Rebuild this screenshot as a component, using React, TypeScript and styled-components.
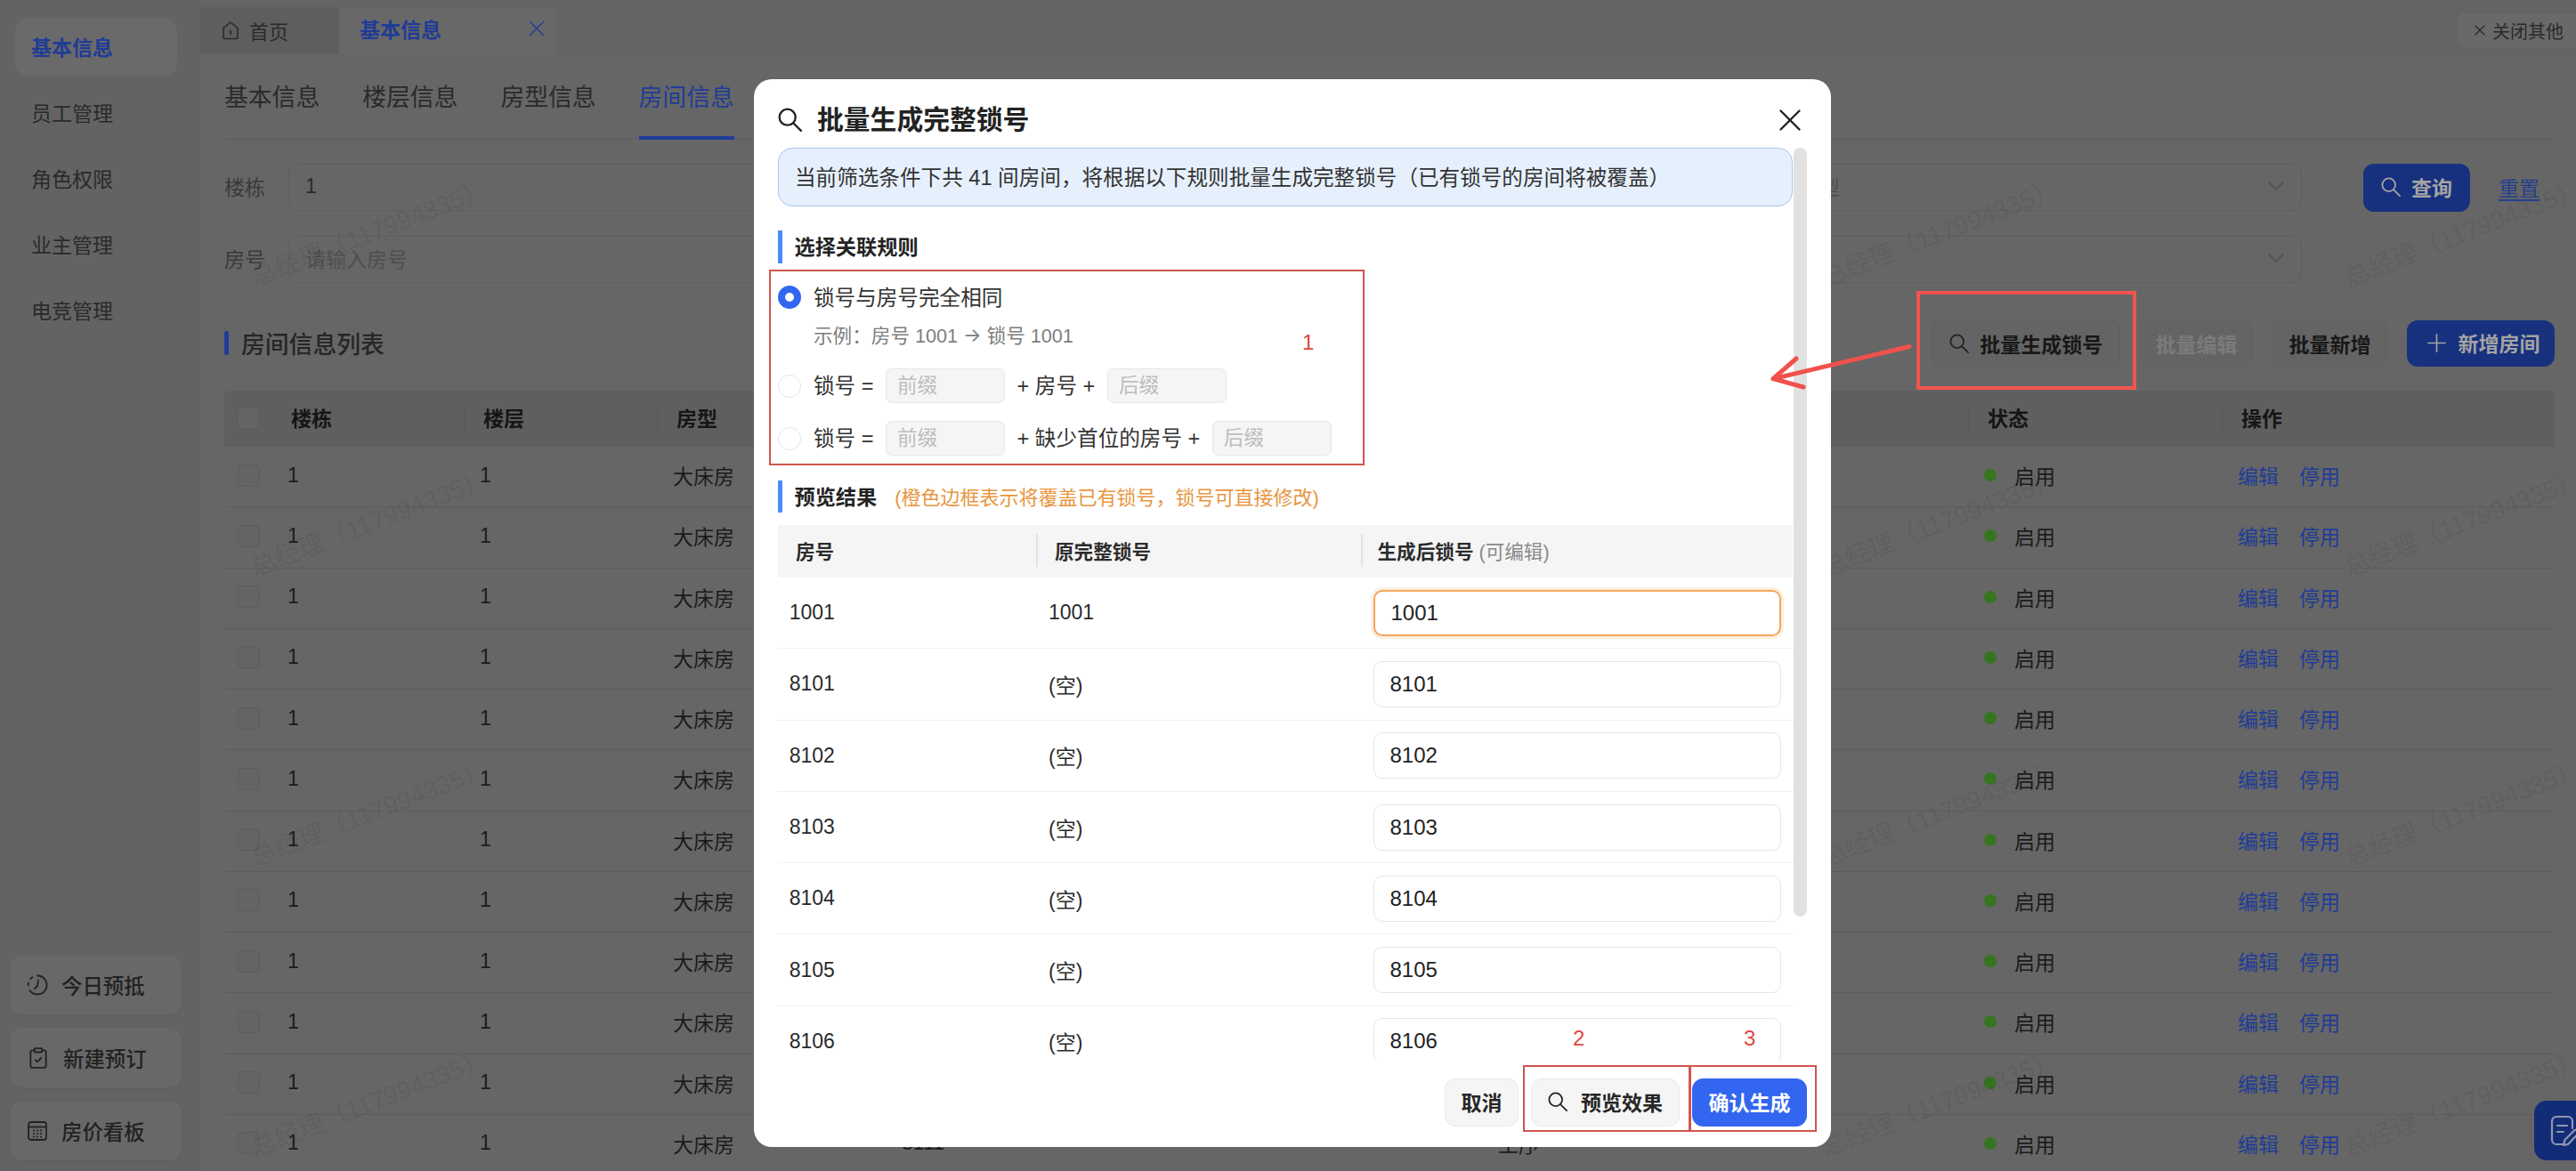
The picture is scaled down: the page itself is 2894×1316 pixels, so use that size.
import styled, { createGlobalStyle } from "styled-components";
import { ChevronDown, ClipboardCheck, Plus, X } from "lucide-react";

const FONT = `"Liberation Sans", "Noto Sans CJK SC", sans-serif`;

const GlobalStyle = createGlobalStyle`
  * {
    box-sizing: border-box;
  }
  html,
  body {
    margin: 0;
    padding: 0;
    background: #666;
    font-family: ${FONT};
  }
  input {
    font-family: ${FONT};
    outline: none;
  }
`;

const Page = styled.div`
  position: relative;
  width: 2894px;
  height: 1316px;
  display: flex;
  overflow: hidden;
  background: #666;
  color: #1c1c1c;
`;

const Sidebar = styled.aside`
  width: 225px;
  flex: none;
  display: flex;
  flex-direction: column;
  justify-content: space-between;
  background: #636363;
  padding: 20px 0 12px;
`;

const NavList = styled.nav`
  display: flex;
  flex-direction: column;
  gap: 8px;
  padding: 0 26px 0 17px;
`;

const NavItem = styled.div<{ $active?: boolean }>`
  height: 66px;
  display: flex;
  align-items: center;
  padding: 0 0 2px 18px;
  border-radius: 15px;
  font-size: 23px;
  font-weight: ${(p) => (p.$active ? 700 : 400)};
  color: ${(p) => (p.$active ? "#1f3c96" : "#2a2a2a")};
  background: ${(p) => (p.$active ? "#6a6a6a" : "transparent")};
`;

const QuickList = styled.div`
  display: flex;
  flex-direction: column;
  gap: 15px;
  padding: 0 21px 0 11px;
`;

const QuickItem = styled.div`
  height: 67px;
  display: flex;
  align-items: center;
  gap: 15px;
  padding-left: 19px;
  border-radius: 14px;
  background: #686868;
  box-shadow: 0 1px 4px rgba(0, 0, 0, 0.05);
  font-size: 23.4px;
  font-weight: 500;
  color: #222;
`;

const Main = styled.main`
  flex: 1;
  min-width: 0;
  display: flex;
  flex-direction: column;
`;

const TabBar = styled.div`
  height: 60px;
  flex: none;
  display: flex;
  align-items: flex-end;
  background: #646464;
`;

const HomeTab = styled.div`
  width: 156px;
  height: 52px;
  display: flex;
  align-items: center;
  gap: 11px;
  padding-left: 24px;
  background: #5e5e5e;
  font-size: 22px;
  color: #2a2a2a;
`;

const ActiveTab = styled.div`
  width: 244px;
  height: 52px;
  display: flex;
  align-items: center;
  justify-content: space-between;
  padding: 0 7px 4px 23px;
  background: #686868;
  font-size: 23px;
  font-weight: 700;
  color: #1f3c96;
`;

const CloseOthers = styled.div`
  width: 132px;
  height: 38px;
  margin: 0 0 7px auto;
  display: flex;
  align-items: center;
  gap: 4px;
  padding-left: 14px;
  border-radius: 5px 0 0 5px;
  background: #696969;
  font-size: 20px;
  color: #2a2a2a;
`;

const Content = styled.div`
  padding: 0 24px 0 27px;
`;

const SubTabs = styled.div`
  height: 97px;
  display: flex;
  gap: 48px;
  border-bottom: 1px solid #5e5e5e;
`;

const SubTab = styled.div<{ $active?: boolean }>`
  height: 97px;
  padding-top: 30px;
  line-height: 40px;
  font-size: 26.8px;
  color: ${(p) => (p.$active ? "#1f3c96" : "#2a2a2a")};
  border-bottom: 4px solid ${(p) => (p.$active ? "#1f3c96" : "transparent")};
`;

const FilterArea = styled.div`
  display: flex;
  margin-top: 27px;
`;

const FilterGrid = styled.div`
  width: 2334px;
  display: grid;
  grid-template-columns: repeat(3, 1fr);
  gap: 28px 30px;
`;

const Field = styled.div`
  display: flex;
  align-items: center;
`;

const FieldLabel = styled.div`
  width: 72px;
  flex: none;
  padding-bottom: 3px;
  font-size: 23px;
  color: #3a3a3a;
`;

const FieldBox = styled.div<{ $muted?: boolean }>`
  flex: 1;
  height: 53px;
  display: flex;
  align-items: center;
  justify-content: space-between;
  padding: 0 12px 3px 18px;
  border: 1px solid #5e5e5e;
  border-radius: 10px;
  white-space: nowrap;
  font-size: 23px;
  color: ${(p) => (p.$muted ? "#4e4e4e" : "#2a2a2a")};
`;

const WideValue = styled.span`
  letter-spacing: 2px;
`;

const FilterActions = styled.div`
  display: flex;
  align-items: center;
  align-self: flex-start;
  height: 54px;
  gap: 32px;
  margin-left: 69px;
`;

const PrimaryButton = styled.div<{ $width: number; $gap: number }>`
  width: ${(p) => p.$width}px;
  height: 100%;
  display: flex;
  align-items: center;
  justify-content: center;
  gap: ${(p) => p.$gap}px;
  padding-bottom: 2px;
  border-radius: 12px;
  background: #17317f;
  font-size: 23px;
  font-weight: 700;
  color: #a4a4a4;
`;

const ResetLink = styled.div`
  padding-bottom: 3px;
  font-size: 23px;
  color: #23408f;
  text-decoration: underline;
  text-underline-offset: 4px;
`;

const ListHead = styled.div`
  display: flex;
  align-items: center;
  justify-content: space-between;
  height: 52px;
  margin-top: 42px;
`;

const ListTitle = styled.h2`
  margin: 0;
  display: flex;
  align-items: center;
  gap: 14px;
  padding-bottom: 2px;
  font-size: 26.8px;
  font-weight: 500;
  color: #262626;
  &::before {
    content: "";
    width: 5px;
    height: 27px;
    border-radius: 2px;
    background: #1f3c96;
  }
`;

const Toolbar = styled.div`
  display: flex;
  height: 100%;
  gap: 22px;
`;

const ToolButton = styled.div<{ $width: number; $disabled?: boolean }>`
  width: ${(p) => p.$width}px;
  display: flex;
  align-items: center;
  justify-content: center;
  gap: 12.5px;
  padding-bottom: 1px;
  border: 1px solid ${(p) => (p.$disabled ? "#626262" : "#5f5f5f")};
  border-radius: 11px;
  background: #646464;
  font-size: 23px;
  font-weight: 700;
  color: ${(p) => (p.$disabled ? "#7b7b7b" : "#181818")};
`;

const GRID = "71px 216px 217px 257px 670px 546px 285px 356px";

const ListHeader = styled.div`
  display: grid;
  grid-template-columns: ${GRID};
  align-items: center;
  height: 63px;
  margin-top: 27px;
  padding-bottom: 3px;
  background: #5f5f5f;
  border-radius: 6px 6px 0 0;
  font-size: 23px;
  font-weight: 700;
  color: #151515;
`;

const HeadCell = styled.div<{ $sep?: boolean }>`
  position: relative;
  padding-left: 4px;
  &::before {
    content: ${(p) => (p.$sep ? '""' : "none")};
    position: absolute;
    left: -18px;
    top: 0;
    bottom: 0;
    width: 1px;
    background: #5a5a5a;
  }
`;

const ListRow = styled.div`
  display: grid;
  grid-template-columns: ${GRID};
  align-items: center;
  height: 68.25px;
  padding-bottom: 3px;
  border-bottom: 1px solid #5d5d5d;
  font-size: 23px;
  color: #1b1b1b;
`;

const CheckBox = styled.div`
  width: 25px;
  height: 25px;
  margin-left: 15px;
  border: 1px solid #5c5c5c;
  border-radius: 5px;
  background: #646464;
`;

const StatusCell = styled.div`
  display: flex;
  align-items: center;
  gap: 20px;
`;

const StatusDot = styled.span`
  width: 14px;
  height: 14px;
  border-radius: 50%;
  background: #36751f;
`;

const Links = styled.div`
  display: flex;
  gap: 23px;
  color: #1f3c96;
`;

const WatermarkGrid = styled.div`
  position: absolute;
  left: 120px;
  top: 96px;
  display: grid;
  grid-template-columns: repeat(5, 588px);
  grid-auto-rows: 326px;
  pointer-events: none;
`;

const Watermark = styled.div`
  display: flex;
  align-items: center;
  justify-content: center;
  transform: rotate(-21deg);
  white-space: nowrap;
  font-size: 28.5px;
  color: rgba(0, 0, 0, 0.065);
`;

const FloatButton = styled.div`
  position: absolute;
  left: 2847px;
  top: 1237px;
  width: 70px;
  height: 67px;
  padding: 16px 0 0 18px;
  border-radius: 14px;
  background: #132c78;
`;

const Modal = styled.section`
  position: absolute;
  left: 847px;
  top: 89px;
  width: 1210px;
  height: 1200px;
  display: flex;
  flex-direction: column;
  border-radius: 20px;
  background: #fff;
  color: #252525;
  overflow: hidden;
`;

const ModalHead = styled.header`
  height: 77px;
  flex: none;
  display: flex;
  align-items: center;
  padding: 14px 25px 0 27px;
`;

const ModalTitle = styled.h1`
  margin: 0;
  display: flex;
  align-items: center;
  gap: 17px;
  flex: 1;
  font-size: 29.8px;
  font-weight: 700;
  color: #222;
`;

const TitleText = styled.span`
  padding-bottom: 5px;
`;

const ModalBody = styled.div`
  position: relative;
  flex: 1;
  min-height: 0;
  overflow: hidden;
  padding-left: 27px;
`;

const Scroller = styled.div`
  position: absolute;
  top: 0;
  right: 27px;
  width: 15.5px;
  height: 864px;
  border-radius: 8px;
  background: #e1e1e1;
`;

const BodyInner = styled.div`
  width: 1139.5px;
`;

const Notice = styled.div`
  height: 66px;
  display: flex;
  align-items: center;
  padding: 0 0 2px 18px;
  border: 1px solid #a9c6ee;
  border-radius: 16px;
  background: #e6f0fd;
  font-size: 23.6px;
  color: #333;
`;

const SectionHead = styled.div<{ $top: number; $height: number }>`
  margin-top: ${(p) => p.$top}px;
  height: ${(p) => p.$height}px;
  display: flex;
  align-items: center;
  gap: 20px;
  padding: 0 0 3px 13.5px;
  border-left: 5px solid #4a8cf7;
  font-size: 23.2px;
  font-weight: 700;
  color: #242424;
`;

const SectionHint = styled.span`
  font-size: 22px;
  font-weight: 400;
  color: #e8963f;
`;

const RuleRow = styled.div<{ $top: number; $height: number }>`
  margin-top: ${(p) => p.$top}px;
  height: ${(p) => p.$height}px;
  display: flex;
  align-items: center;
  gap: 13.5px;
  font-size: 23.6px;
  color: #333;
`;

const RuleText = styled.span`
  padding-bottom: 3px;
`;

const Radio = styled.span<{ $checked?: boolean }>`
  width: 26px;
  height: 26px;
  flex: none;
  margin-right: 0.5px;
  border-radius: 50%;
  border: ${(p) => (p.$checked ? "8px solid #3366f0" : "1px solid #e4e4e4")};
  background: #fff;
`;

const RuleExample = styled.div`
  margin: 11px 0 0 40px;
  height: 32px;
  display: flex;
  align-items: center;
  gap: 6px;
  padding-bottom: 3px;
  font-size: 21.6px;
  color: #7d7d7d;
`;

const ExampleArrow = styled.span`
  font-family: Inter, sans-serif;
`;

const AffixInput = styled.input`
  width: 134px;
  height: 39px;
  padding: 0 12px;
  border: 1px solid #e6e6e6;
  border-radius: 7px;
  background: #f5f5f5;
  font-size: 22.5px;
  &::placeholder {
    color: #bdbdbd;
  }
`;

const PREVIEW_GRID = "304px 364.5px 1fr";

const PreviewHeader = styled.div`
  display: grid;
  grid-template-columns: ${PREVIEW_GRID};
  align-items: center;
  height: 59px;
  margin-top: 14px;
  padding-bottom: 3px;
  background: #f5f5f5;
  font-size: 21.6px;
  font-weight: 600;
  color: #2c2c2c;
`;

const PreviewHeadCell = styled.div<{ $indent: number; $sep?: boolean }>`
  position: relative;
  padding-left: ${(p) => p.$indent}px;
  &::before {
    content: ${(p) => (p.$sep ? '""' : "none")};
    position: absolute;
    left: -14px;
    top: -3px;
    bottom: -3px;
    width: 2px;
    background: #e2e2e2;
  }
`;

const MutedNote = styled.span`
  font-weight: 400;
  color: #8a8a8a;
`;

const PreviewRow = styled.div`
  display: grid;
  grid-template-columns: ${PREVIEW_GRID};
  align-items: center;
  height: 80.3px;
  border-bottom: 1px solid #f0f0f0;
  font-size: 23px;
  color: #2a2a2a;
`;

const FirstCell = styled.div`
  padding-left: 12.7px;
`;

const LockInput = styled.input<{ $warn?: boolean }>`
  width: 458px;
  height: 52px;
  padding: 0 18px;
  border: ${(p) => (p.$warn ? "2px solid #f1a65c" : "1px solid #e6e6e6")};
  border-radius: 10px;
  box-shadow: ${(p) => (p.$warn ? "0 0 0 3px rgba(241, 166, 92, 0.18)" : "none")};
  background: #fff;
  font-size: 24px;
  color: #222;
`;

const ModalFoot = styled.footer`
  height: 96px;
  flex: none;
  display: flex;
  justify-content: flex-end;
  gap: 14px;
  padding: 19px 27px 0 0;
`;

const FootButton = styled.div<{ $primary?: boolean; $width: number }>`
  width: ${(p) => p.$width}px;
  height: 54px;
  display: flex;
  align-items: center;
  justify-content: center;
  gap: 15px;
  padding-bottom: 2px;
  border: 1px solid ${(p) => (p.$primary ? "#3366f0" : "#e8e8e8")};
  border-radius: 12px;
  background: ${(p) => (p.$primary ? "#3366f0" : "#f5f5f5")};
  font-size: 23px;
  font-weight: 700;
  color: ${(p) => (p.$primary ? "#fff" : "#262626")};
`;

const MarkBox = styled.div<{ $x: number; $y: number; $w: number; $h: number; $thick?: boolean }>`
  position: absolute;
  left: ${(p) => p.$x}px;
  top: ${(p) => p.$y}px;
  width: ${(p) => p.$w}px;
  height: ${(p) => p.$h}px;
  border: ${(p) => (p.$thick ? "4px solid #f4544e" : "2px solid #d0554f")};
  pointer-events: none;
`;

const MarkNumber = styled.div<{ $x: number; $y: number }>`
  position: absolute;
  left: ${(p) => p.$x}px;
  top: ${(p) => p.$y}px;
  font-size: 24px;
  line-height: 28px;
  color: #e2453f;
`;

const MarkArrow = styled.svg`
  position: absolute;
  left: 0;
  top: 0;
  pointer-events: none;
`;

// handle is longer than lucide's search, the circle sits further up-left
const SearchIcon = ({ size, color = "currentColor", width = 2 }: { size: number; color?: string; width?: number }) => (
  <svg width={size} height={size} viewBox="0 0 24 24" fill="none" stroke={color} strokeWidth={width} strokeLinecap="round">
    <circle cx="9.5" cy="9.5" r="8" />
    <path d="M15.3 15.3 23 23" />
  </svg>
);

const HomeIcon = () => (
  <svg width="20" height="22" viewBox="0 0 20 22" fill="none" stroke="#2a2a2a" strokeWidth="1.6" strokeLinejoin="round" strokeLinecap="round">
    <path d="M2 8.5 10 2l8 6.5V19a1.5 1.5 0 0 1-1.5 1.5h-13A1.5 1.5 0 0 1 2 19Z" />
    <path d="M10 11v4.5" />
  </svg>
);

const ClockIcon = () => (
  <svg width="24" height="24" viewBox="0 0 24 24" fill="none" stroke="#222" strokeWidth="1.8" strokeLinecap="round">
    <path d="M12 1.5a10.5 10.5 0 1 1-8.6 16.5" />
    <path d="M1.6 12.6a10.5 10.5 0 0 1 .9-4.2M4.2 5.3a10.5 10.5 0 0 1 3.2-2.7" strokeDasharray="3 2.4" />
    <path d="M13 6.5 12 13l-3 3" />
  </svg>
);

const CalendarIcon = () => (
  <svg width="24" height="24" viewBox="0 0 24 24" fill="none" stroke="#222" strokeWidth="1.8">
    <rect x="2" y="2" width="20" height="20" rx="3" />
    <path d="M2 7.5h20" />
    <g fill="#222" stroke="none">
      <circle cx="8" cy="11.5" r="1.1" />
      <circle cx="12" cy="11.5" r="1.1" />
      <circle cx="16" cy="11.5" r="1.1" />
      <circle cx="8" cy="15" r="1.1" />
      <circle cx="12" cy="15" r="1.1" />
      <circle cx="16" cy="15" r="1.1" />
      <circle cx="8" cy="18.5" r="1.1" />
      <circle cx="12" cy="18.5" r="1.1" />
      <circle cx="16" cy="18.5" r="1.1" />
    </g>
  </svg>
);

const NoteIcon = () => (
  <svg width="42" height="36" viewBox="0 0 42 36" fill="none" stroke="#8f97ad" strokeWidth="2.2" strokeLinecap="round" strokeLinejoin="round">
    <path d="M15 33H7a5 5 0 0 1-5-5V7a5 5 0 0 1 5-5h13a5 5 0 0 1 5 5v8" />
    <path d="M8 12h11M8 19h7" />
    <path d="M15 34l1.5-6 11-11a3 3 0 0 1 4 4L20 33Z" />
  </svg>
);

const navItems = ["基本信息", "员工管理", "角色权限", "业主管理", "电竞管理"];
const subTabs = ["基本信息", "楼层信息", "房型信息", "房间信息"];
const roomRows = Array.from({ length: 12 }, (_, i) => i);
const previewRows = [
  { room: "1001", old: "1001", next: "1001", warn: true },
  { room: "8101", old: "(空)", next: "8101" },
  { room: "8102", old: "(空)", next: "8102" },
  { room: "8103", old: "(空)", next: "8103" },
  { room: "8104", old: "(空)", next: "8104" },
  { room: "8105", old: "(空)", next: "8105" },
  { room: "8106", old: "(空)", next: "8106" },
];

export default function App() {
  return (
    <Page>
      <GlobalStyle />
      <Sidebar>
        <NavList>
          {navItems.map((name, i) => (
            <NavItem key={name} $active={i === 0}>
              {name}
            </NavItem>
          ))}
        </NavList>
        <QuickList>
          <QuickItem>
            <ClockIcon />
            今日预抵
          </QuickItem>
          <QuickItem>
            <ClipboardCheck size={26} color="#222" strokeWidth={1.7} />
            新建预订
          </QuickItem>
          <QuickItem>
            <CalendarIcon />
            房价看板
          </QuickItem>
        </QuickList>
      </Sidebar>

      <Main>
        <TabBar>
          <HomeTab>
            <HomeIcon />
            首页
          </HomeTab>
          <ActiveTab>
            基本信息
            <X size={30} color="#1f3c96" strokeWidth={1.1} />
          </ActiveTab>
          <CloseOthers>
            <X size={20} color="#2a2a2a" strokeWidth={1.5} />
            关闭其他
          </CloseOthers>
        </TabBar>

        <Content>
          <SubTabs>
            {subTabs.map((name, i) => (
              <SubTab key={name} $active={i === 3}>
                {name}
              </SubTab>
            ))}
          </SubTabs>

          <FilterArea>
            <FilterGrid>
              <Field>
                <FieldLabel>楼栋</FieldLabel>
                <FieldBox>1</FieldBox>
              </Field>
              <Field>
                <FieldLabel>楼层</FieldLabel>
                <FieldBox $muted>请选择楼层</FieldBox>
              </Field>
              <Field>
                <FieldLabel>房型</FieldLabel>
                <FieldBox $muted>
                  <WideValue>请选择的房型</WideValue>
                  <ChevronDown size={32} color="#4e4e4e" strokeWidth={1.1} />
                </FieldBox>
              </Field>
              <Field>
                <FieldLabel>房号</FieldLabel>
                <FieldBox $muted>请输入房号</FieldBox>
              </Field>
              <Field>
                <FieldLabel>锁号</FieldLabel>
                <FieldBox $muted>请输入锁号</FieldBox>
              </Field>
              <Field>
                <FieldLabel>状态</FieldLabel>
                <FieldBox $muted>
                  <span />
                  <ChevronDown size={32} color="#4e4e4e" strokeWidth={1.1} />
                </FieldBox>
              </Field>
            </FilterGrid>
            <FilterActions>
              <PrimaryButton $width={120} $gap={12}>
                <SearchIcon size={22} width={1.9} />
                查询
              </PrimaryButton>
              <ResetLink>重置</ResetLink>
            </FilterActions>
          </FilterArea>

          <ListHead>
            <ListTitle>房间信息列表</ListTitle>
            <Toolbar>
              <ToolButton $width={212}>
                <SearchIcon size={22} color="#222" width={1.9} />
                批量生成锁号
              </ToolButton>
              <ToolButton $width={127} $disabled>
                批量编辑
              </ToolButton>
              <ToolButton $width={129}>批量新增</ToolButton>
              <PrimaryButton $width={166} $gap={8}>
                <Plus size={33} strokeWidth={1.2} />
                新增房间
              </PrimaryButton>
            </Toolbar>
          </ListHead>

          <ListHeader>
            <CheckBox />
            <HeadCell>楼栋</HeadCell>
            <HeadCell $sep>楼层</HeadCell>
            <HeadCell $sep>房型</HeadCell>
            <HeadCell />
            <HeadCell />
            <HeadCell $sep>状态</HeadCell>
            <HeadCell $sep>操作</HeadCell>
          </ListHeader>
          {roomRows.map((i) => (
            <ListRow key={i}>
              <CheckBox />
              <div>1</div>
              <div>1</div>
              <div>大床房</div>
              <div>8111</div>
              <div>工序</div>
              <StatusCell>
                <StatusDot />
                启用
              </StatusCell>
              <Links>
                <span>编辑</span>
                <span>停用</span>
              </Links>
            </ListRow>
          ))}
        </Content>
      </Main>

      <WatermarkGrid>
        {Array.from({ length: 20 }, (_, i) => (
          // the two middle columns sit wholly behind the dialog
          <Watermark key={i}>{i % 5 === 1 || i % 5 === 2 ? null : "总经理（117994335）"}</Watermark>
        ))}
      </WatermarkGrid>

      <FloatButton>
        <NoteIcon />
      </FloatButton>

      <Modal>
        <ModalHead>
          <ModalTitle>
            <SearchIcon size={27} color="#222" width={2.1} />
            <TitleText>批量生成完整锁号</TitleText>
          </ModalTitle>
          <X size={42} color="#222" strokeWidth={1.4} />
        </ModalHead>
        <ModalBody>
          <Scroller />
          <BodyInner>
            <Notice>当前筛选条件下共 41 间房间，将根据以下规则批量生成完整锁号（已有锁号的房间将被覆盖）</Notice>

            <SectionHead $top={27} $height={37}>
              选择关联规则
            </SectionHead>
            <RuleRow $top={22} $height={32}>
              <Radio $checked />
              <RuleText>锁号与房号完全相同</RuleText>
            </RuleRow>
            <RuleExample>
              示例：房号 1001
              <ExampleArrow>→</ExampleArrow>
              锁号 1001
            </RuleExample>
            <RuleRow $top={21} $height={39}>
              <Radio />
              <RuleText>锁号 =</RuleText>
              <AffixInput placeholder="前缀" readOnly />
              <RuleText>+ 房号 +</RuleText>
              <AffixInput placeholder="后缀" readOnly />
            </RuleRow>
            <RuleRow $top={20} $height={39}>
              <Radio />
              <RuleText>锁号 =</RuleText>
              <AffixInput placeholder="前缀" readOnly />
              <RuleText>+ 缺少首位的房号 +</RuleText>
              <AffixInput placeholder="后缀" readOnly />
            </RuleRow>

            <SectionHead $top={28} $height={36}>
              预览结果
              <SectionHint>(橙色边框表示将覆盖已有锁号，锁号可直接修改)</SectionHint>
            </SectionHead>
            <PreviewHeader>
              <PreviewHeadCell $indent={20}>房号</PreviewHeadCell>
              <PreviewHeadCell $indent={7} $sep>
                原完整锁号
              </PreviewHeadCell>
              <PreviewHeadCell $indent={5} $sep>
                生成后锁号 <MutedNote>(可编辑)</MutedNote>
              </PreviewHeadCell>
            </PreviewHeader>
            {previewRows.map((row) => (
              <PreviewRow key={row.room}>
                <FirstCell>{row.room}</FirstCell>
                <div>{row.old}</div>
                <LockInput defaultValue={row.next} $warn={row.warn} readOnly />
              </PreviewRow>
            ))}
          </BodyInner>
        </ModalBody>
        <ModalFoot>
          <FootButton $width={83}>取消</FootButton>
          <FootButton $width={167}>
            <SearchIcon size={22} color="#222" width={1.9} />
            预览效果
          </FootButton>
          <FootButton $width={129} $primary>
            确认生成
          </FootButton>
        </ModalFoot>
      </Modal>

      <MarkBox $x={864} $y={303} $w={669} $h={220} />
      <MarkBox $x={1711} $y={1197} $w={188} $h={75} />
      <MarkBox $x={1898} $y={1197} $w={143} $h={75} />
      <MarkBox $x={2153} $y={327} $w={247} $h={111} $thick />
      <MarkNumber $x={1463} $y={371}>1</MarkNumber>
      <MarkNumber $x={1767} $y={1153}>2</MarkNumber>
      <MarkNumber $x={1959} $y={1153}>3</MarkNumber>
      <MarkArrow width="2894" height="1316" viewBox="0 0 2894 1316" fill="none" stroke="#f0514c" strokeWidth="5" strokeLinecap="round" strokeLinejoin="round">
        <path d="M2145 389.5 1992 425.7" />
        <path d="M2018 403 1992 425.7 2026 435" />
      </MarkArrow>
    </Page>
  );
}
